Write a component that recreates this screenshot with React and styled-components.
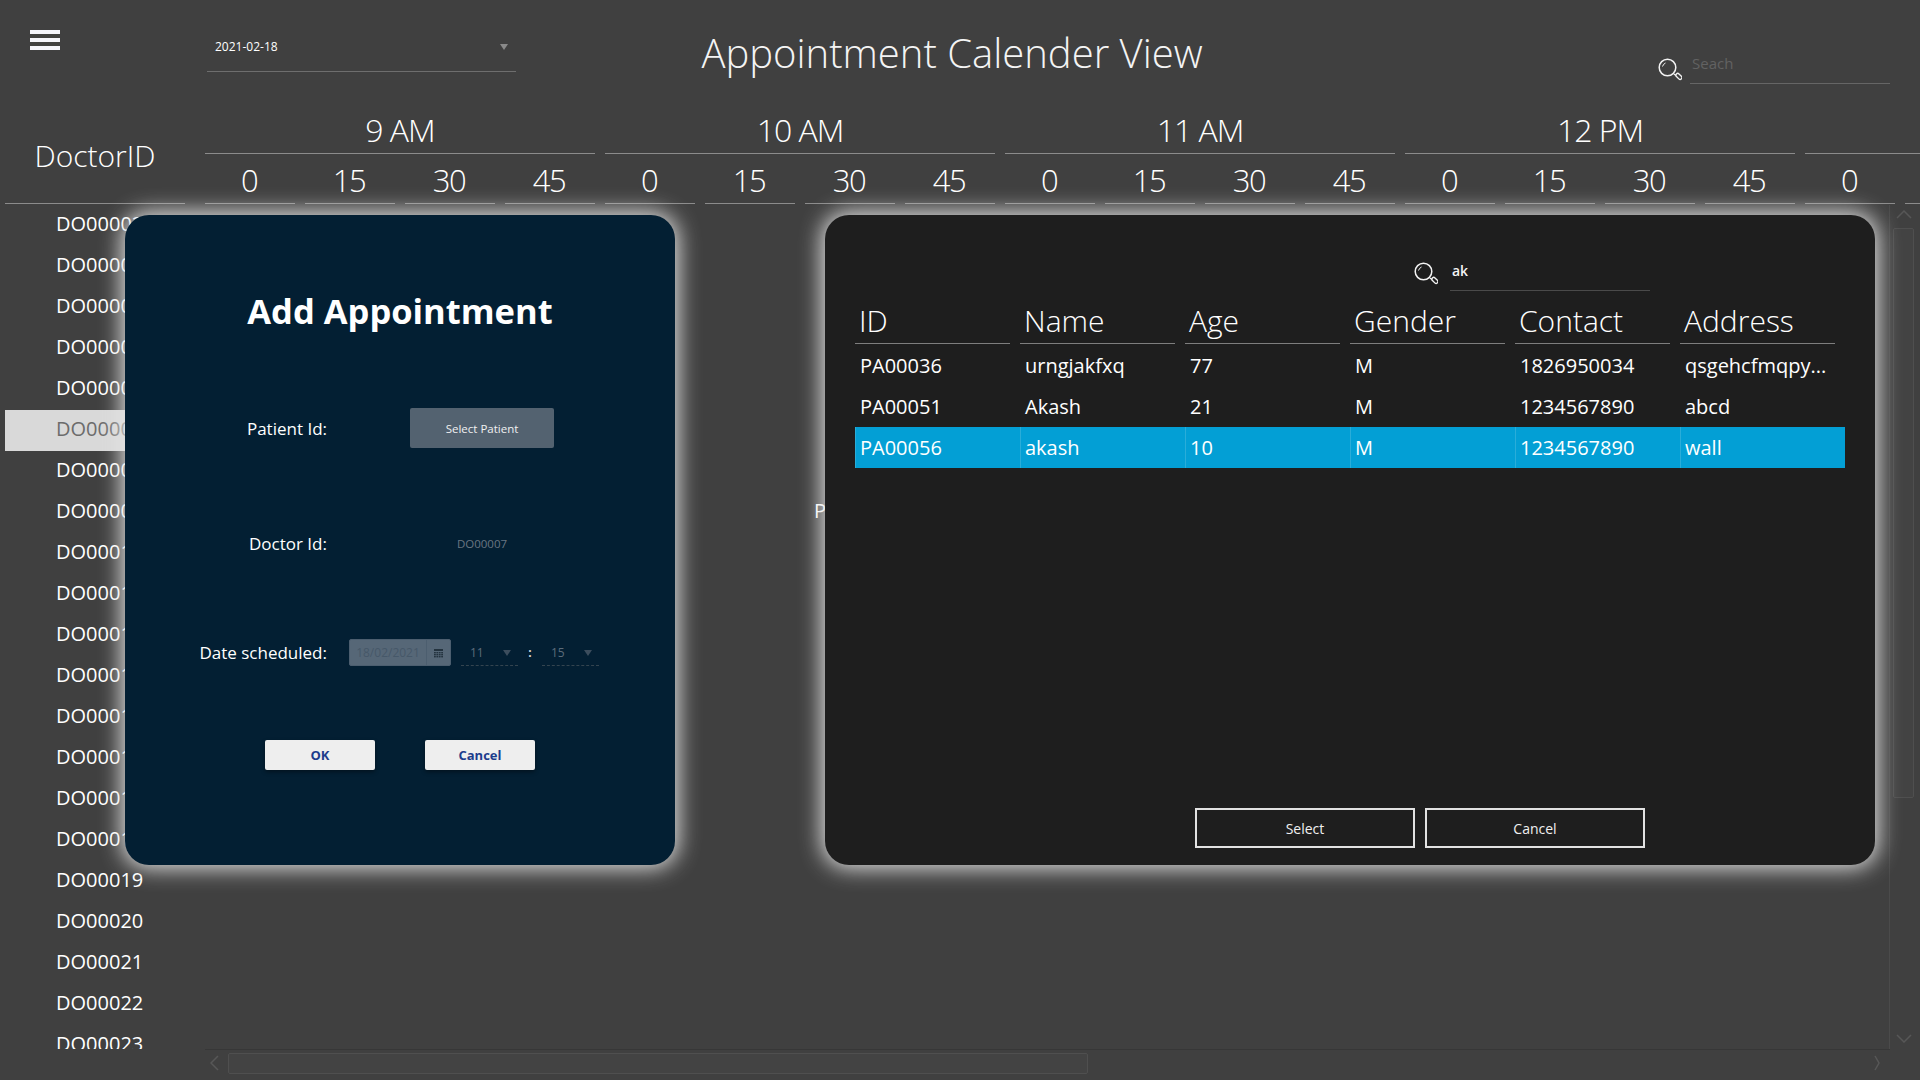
import React from "react";
import styled, { createGlobalStyle } from "styled-components";

const GlobalStyle = createGlobalStyle`
	html, body {
		margin: 0;
		padding: 0;
		background: #404040;
	}
	* {
		box-sizing: border-box;
	}
	body {
		font-family: "Open Sans", "Noto Sans", sans-serif;
		color: #fff;
	}
`;

const Page = styled.div`
	position: relative;
	width: 1920px;
	height: 1080px;
	overflow: hidden;
	background: #404040;
	display: flex;
	flex-direction: column;
`;

const TopBar = styled.div`
	display: flex;
	align-items: flex-start;
	height: 100px;
	padding-left: 30px;
	flex-shrink: 0;
`;
const Hamburger = styled.div`
	width: 30px;
	height: 20px;
	margin-top: 30px;
	display: flex;
	flex-direction: column;
	justify-content: space-between;
`;
const Bar = styled.span`
	display: block;
	height: 4px;
	background: #f4f4fb;
`;
const DateSelect = styled.div`
	width: 309px;
	height: 72px;
	margin-left: 147px;
	padding: 37px 8px 0;
	display: flex;
	justify-content: space-between;
	font-size: 12px;
	line-height: 20px;
	border-bottom: 1px solid #6e6e6e;
`;
const Caret = styled.span`
	width: 0;
	height: 0;
	margin-top: ${(p) => p.$top || 7}px;
	border-left: 4px solid transparent;
	border-right: 4px solid transparent;
	border-top: 6px solid ${(p) => p.$color || "#8a8a8a"};
`;
const Title = styled.h1`
	width: 872px;
	margin: 23px 0 0;
	text-align: center;
	font-size: 40px;
	font-weight: 300;
	line-height: 60px;
	color: #f4f4f4;
`;
const Search = styled.div`
	display: flex;
	gap: ${(p) => p.$gap}px;
	margin: ${(p) => p.$margin};
`;
const Magnifier = styled.svg`
	width: 24px;
	height: 24px;
	margin-top: ${(p) => p.$top}px;
`;
const SearchField = styled.div`
	width: 200px;
	height: ${(p) => p.$height}px;
	font-size: ${(p) => (p.$filled ? 14 : 15)}px;
	line-height: 20px;
	font-weight: ${(p) => (p.$filled ? 600 : 400)};
	color: ${(p) => (p.$filled ? "#f4f4f4" : "#626262")};
	padding-left: 2px;
	border-bottom: 1px solid ${(p) => (p.$filled ? "#4a4a4a" : "#666")};
`;

const ScheduleHead = styled.div`
	display: flex;
	padding-left: 5px;
	margin-bottom: 1px;
	flex-shrink: 0;
`;
const DoctorHead = styled.div`
	width: 180px;
	height: 104px;
	margin-right: 20px;
	flex-shrink: 0;
	padding-top: 32px;
	text-align: center;
	font-size: 30px;
	font-weight: 300;
	line-height: 48px;
	border-bottom: 1px solid #8c8c8c;
`;
const Hour = styled.div`
	width: ${(p) => (p.$last ? 115 : 390)}px;
	margin-right: 10px;
	flex-shrink: 0;
`;
const HourLabel = styled.div`
	height: 54px;
	line-height: 60px;
	text-align: center;
	font-size: 32px;
	font-weight: 300;
	letter-spacing: -1px;
	border-bottom: 1px solid #8c8c8c;
`;
const Minutes = styled.div`
	display: flex;
	gap: 10px;
`;
const Minute = styled.div`
	width: 90px;
	height: 50px;
	flex-shrink: 0;
	padding-right: 2px;
	line-height: 53px;
	text-align: center;
	font-size: 31px;
	font-weight: 300;
	letter-spacing: -1.5px;
	border-bottom: 1px solid #8c8c8c;
`;

const Body = styled.div`
	flex: 1;
	display: flex;
	min-height: 0;
`;
const DoctorList = styled.div`
	width: 185px;
	padding-left: 5px;
	overflow: hidden;
	flex-shrink: 0;
`;
const DoctorRow = styled.div`
	height: 41px;
	padding-left: 51px;
	font-size: 20px;
	line-height: ${(p) => (p.$selected ? 38 : 37)}px;
	color: ${(p) => (p.$selected ? "#6c6c6c" : "#fff")};
	background: ${(p) => (p.$selected ? "#d9d9d9" : "transparent")};
`;
const SlotGrid = styled.div`
	flex: 1;
	margin-left: 15px;
	display: grid;
	grid-template-columns: repeat(17, 100px);
	grid-auto-rows: 41px;
	overflow: hidden;
`;
const Slot = styled.div`
	grid-column: ${(p) => p.$col};
	grid-row: ${(p) => p.$row};
	padding-left: 14px;
	font-size: 20px;
	line-height: 38px;
	white-space: nowrap;
`;
const VScroll = styled.div`
	width: 31px;
	flex-shrink: 0;
	padding: 5px 6px 6px 3px;
	border-left: 1px solid #4b4b4b;
	display: flex;
	flex-direction: column;
	align-items: center;
`;
const VThumb = styled.div`
	width: 21px;
	height: 570px;
	margin: 9px 0 auto;
	border: 1px solid #4f4f4f;
	border-radius: 2px;
	background: #434343;
`;
const HScroll = styled.div`
	height: 31px;
	margin-left: 205px;
	margin-right: 30px;
	padding: 3px 10px 7px 5px;
	border-top: 1px solid #373737;
	display: flex;
	align-items: center;
	flex-shrink: 0;
`;
const HThumb = styled.div`
	width: 860px;
	height: 21px;
	margin: 0 auto 0 9px;
	border: 1px solid #4f4f4f;
	border-radius: 2px;
	background: #434343;
`;

const Modal = styled.div`
	position: absolute;
	top: 215px;
	left: ${(p) => p.$left}px;
	width: ${(p) => p.$width}px;
	height: 650px;
	border-radius: 24px;
	background: ${(p) => p.$bg};
	box-shadow: 0 0 22px 3px #e4e4e4;
	display: flex;
	flex-direction: column;
`;
const ModalTitle = styled.h2`
	margin: 71px 0 0;
	text-align: center;
	font-size: 34.5px;
	font-weight: 700;
	line-height: 50px;
`;
const FormRow = styled.div`
	display: flex;
	align-items: center;
	height: 40px;
	margin-top: ${(p) => p.$top}px;
`;
const Label = styled.label`
	width: 202px;
	text-align: right;
	font-size: 17px;
	flex-shrink: 0;
`;
const SelectPatient = styled.button`
	width: 144px;
	height: 40px;
	margin-left: 83px;
	border: 0;
	border-radius: 2px;
	background: #536270;
	color: #f0f0f0;
	font-family: inherit;
	font-size: 11.5px;
`;
const DoctorValue = styled.span`
	width: 144px;
	margin-left: 83px;
	text-align: center;
	font-size: 11.5px;
	color: #6a7682;
`;
const DateInput = styled.div`
	width: 102px;
	height: 27px;
	margin-left: 22px;
	margin-right: 10px;
	display: flex;
	border: 1px solid #4c5e6f;
	border-radius: 2px;
	background: #566777;
	font-size: 12px;
	line-height: 25px;
	color: #465869;
`;
const DateText = styled.span`
	width: 77px;
	text-align: center;
	border-right: 1px solid #4c5e6f;
`;
const CalendarIcon = styled.svg`
	width: 9px;
	height: 9px;
	margin: 9px 0 0 7px;
`;
const TimeSelect = styled.div`
	width: 57px;
	height: 27px;
	padding: 0 7px 0 9px;
	display: flex;
	justify-content: space-between;
	font-size: 12px;
	line-height: 27px;
	color: #5c6c7b;
	border-bottom: 1px dashed #34444f;
`;
const Colon = styled.span`
	width: 24px;
	text-align: center;
	font-size: 12px;
	font-weight: 700;
	color: #d8d8d8;
`;
const Actions = styled.div`
	display: flex;
	gap: 50px;
	margin: 68px 0 0 140px;
`;
const DialogButton = styled.button`
	width: 110px;
	height: 30px;
	border: 0;
	border-radius: 2px;
	background: #eeeeee;
	color: #1c3c8c;
	font-family: inherit;
	font-size: 13px;
	font-weight: 700;
	box-shadow: 0 2px 4px rgba(0, 0, 0, 0.4);
`;
const Table = styled.div`
	width: 990px;
	margin: 9px 0 0 30px;
`;
const HeadRow = styled.div`
	display: grid;
	grid-template-columns: repeat(6, 165px);
	height: 44px;
	margin-bottom: 1px;
`;
const HeadCell = styled.div`
	margin-right: 10px;
	padding-left: 4px;
	font-size: 30px;
	font-weight: 300;
	line-height: 42px;
	border-bottom: 1px solid #7e7e7e;
`;
const Row = styled.div`
	display: grid;
	grid-template-columns: repeat(6, 165px);
	height: 41px;
	background: ${(p) => (p.$selected ? "#039fd5" : "transparent")};
`;
const Cell = styled.div`
	padding-left: 4px;
	font-size: 20px;
	line-height: 41px;
	white-space: nowrap;
	border-left: 1px solid ${(p) => (p.$selected ? "#2aadd9" : "transparent")};
`;
const TableActions = styled.div`
	display: flex;
	gap: 10px;
	margin: auto 0 17px 370px;
`;
const OutlineButton = styled.button`
	width: 220px;
	height: 40px;
	border: 2px solid #e2e2e2;
	background: transparent;
	color: #f0f0f0;
	font-family: inherit;
	font-size: 14px;
`;

const hours = ["9 AM", "10 AM", "11 AM", "12 PM"];
const minutes = [0, 15, 30, 45];
const doctors = ["02", "03", "04", "05", "06", "07", "08", "09", "10", "11", "12", "13", "14", "15", "16", "18", "19", "20", "21", "22", "23"];
const columns = ["ID", "Name", "Age", "Gender", "Contact", "Address"];
const patients = [
	["PA00036", "urngjakfxq", "77", "M", "1826950034", "qsgehcfmqpy..."],
	["PA00051", "Akash", "21", "M", "1234567890", "abcd"],
	["PA00056", "akash", "10", "M", "1234567890", "wall"],
];
const calendarDots = [3, 5, 7].flatMap((y) => [0, 2.4, 4.8, 7.2].map((x) => [x, y]));

function SearchIcon({ top }) {
	return (
		<Magnifier $top={top} viewBox="0 0 24 24" fill="none" stroke="#f2f2f2">
			<circle cx="9.5" cy="9.5" r="8.3" strokeWidth="1.5" />
			<path d="M4.5 8.5a5.5 5.5 0 0 1 3-3.5" strokeWidth="1" />
			<path d="M16 16l2 1.5" strokeWidth="1.5" />
			<rect x="17.4" y="16.6" width="7" height="3.6" rx="1.8" transform="rotate(45 20.9 18.4)" strokeWidth="1.4" />
		</Magnifier>
	);
}

function Chevron({ points, width, height }) {
	return (
		<svg width={width} height={height} viewBox={`0 0 ${width} ${height}`} fill="none" stroke="#575757" strokeWidth="1.5">
			<polyline points={points} />
		</svg>
	);
}

function App() {
	return (
		<Page>
			<GlobalStyle />
			<TopBar>
				<Hamburger>
					<Bar />
					<Bar />
					<Bar />
				</Hamburger>
				<DateSelect>
					<span>2021-02-18</span>
					<Caret />
				</DateSelect>
				<Title>Appointment Calender View</Title>
				<Search $gap={8} $margin="53px 0 0 270px">
					<SearchIcon top={5} />
					<SearchField $height={31}>Seach</SearchField>
				</Search>
			</TopBar>

			<ScheduleHead>
				<DoctorHead>DoctorID</DoctorHead>
				{hours.map((hour) => (
					<Hour key={hour}>
						<HourLabel>{hour}</HourLabel>
						<Minutes>
							{minutes.map((minute) => (
								<Minute key={minute}>{minute}</Minute>
							))}
						</Minutes>
					</Hour>
				))}
				<Hour $last>
					<HourLabel />
					<Minutes>
						<Minute>0</Minute>
						<Minute />
					</Minutes>
				</Hour>
			</ScheduleHead>

			<Body>
				<DoctorList>
					{doctors.map((id) => (
						<DoctorRow key={id} $selected={id === "07"}>
							DO000{id}
						</DoctorRow>
					))}
				</DoctorList>
				<SlotGrid>
					<Slot $col={7} $row={8}>
						PA00051
					</Slot>
				</SlotGrid>
				<VScroll>
					<Chevron width={16} height={9} points="1,8 8,1 15,8" />
					<VThumb />
					<Chevron width={16} height={9} points="1,1 8,8 15,1" />
				</VScroll>
			</Body>
			<HScroll>
				<Chevron width={9} height={16} points="8,1 1,8 8,15" />
				<HThumb />
				<Chevron width={6} height={16} points="1,1 5,8 1,15" />
			</HScroll>

			<Modal $left={125} $width={550} $bg="#031f33">
				<ModalTitle>Add Appointment</ModalTitle>
				<FormRow $top={72}>
					<Label>Patient Id:</Label>
					<SelectPatient>Select Patient</SelectPatient>
				</FormRow>
				<FormRow $top={75}>
					<Label>Doctor Id:</Label>
					<DoctorValue>DO00007</DoctorValue>
				</FormRow>
				<FormRow $top={69}>
					<Label>Date scheduled:</Label>
					<DateInput>
						<DateText>18/02/2021</DateText>
						<CalendarIcon viewBox="0 0 9 9" fill="#24333f">
							<rect width="9" height="2" />
							{calendarDots.map(([x, y]) => (
								<rect key={`${x}-${y}`} x={x} y={y} width="1.8" height="1.4" />
							))}
						</CalendarIcon>
					</DateInput>
					<TimeSelect>
						<span>11</span>
						<Caret $top={11} $color="#3c4d5d" />
					</TimeSelect>
					<Colon>:</Colon>
					<TimeSelect>
						<span>15</span>
						<Caret $top={11} $color="#3c4d5d" />
					</TimeSelect>
				</FormRow>
				<Actions>
					<DialogButton>OK</DialogButton>
					<DialogButton>Cancel</DialogButton>
				</Actions>
			</Modal>

			<Modal $left={825} $width={1050} $bg="#1e1e1e">
				<Search $gap={12} $margin="46px 0 0 589px">
					<SearchIcon top={1} />
					<SearchField $height={30} $filled>
						ak
					</SearchField>
				</Search>
				<Table>
					<HeadRow>
						{columns.map((col) => (
							<HeadCell key={col}>{col}</HeadCell>
						))}
					</HeadRow>
					{patients.map((patient, i) => (
						<Row key={patient[0]} $selected={i === 2}>
							{patient.map((value, j) => (
								<Cell key={j} $selected={i === 2}>
									{value}
								</Cell>
							))}
						</Row>
					))}
				</Table>
				<TableActions>
					<OutlineButton>Select</OutlineButton>
					<OutlineButton>Cancel</OutlineButton>
				</TableActions>
			</Modal>
		</Page>
	);
}

export default App;
